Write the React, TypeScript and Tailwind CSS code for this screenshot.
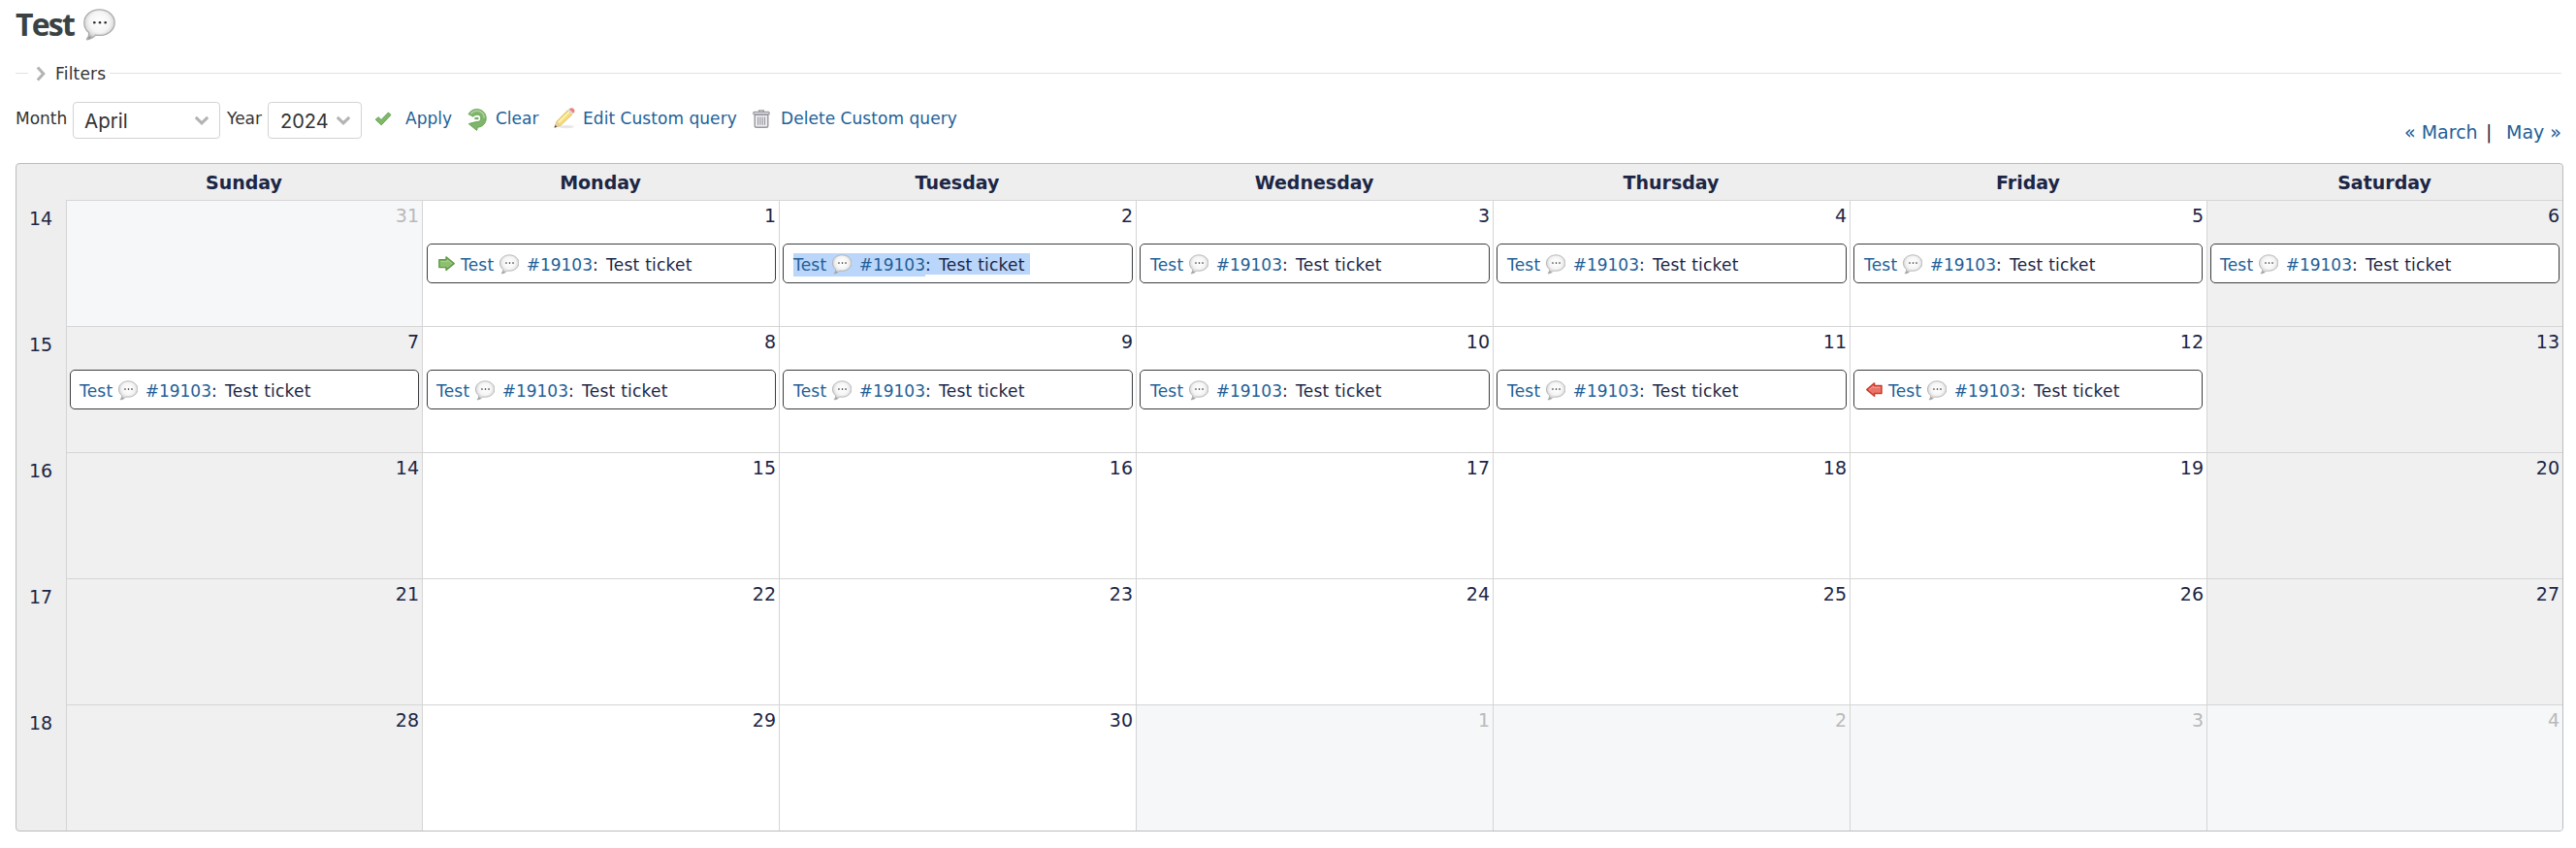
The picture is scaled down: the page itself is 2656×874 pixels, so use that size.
import React from "react";

const sans = "font-['DejaVu_Sans',Verdana,sans-serif]";

function Bubble({ className }: { className: string }) {
  return (
    <svg viewBox="0 0 33 33" className={className} aria-hidden="true">
      <defs>
        <radialGradient id="bubbleFill" cx="0.5" cy="0.42" r="0.6">
          <stop offset="0" stopColor="#ffffff" />
          <stop offset="0.55" stopColor="#f5f5f5" />
          <stop offset="0.82" stopColor="#d8d8d8" />
          <stop offset="1" stopColor="#989898" />
        </radialGradient>
      </defs>
      <path
        d="M16.5 0.8C25.3 0.8 32.2 6.6 32.2 14.2C32.2 21.8 25.3 27.4 16.5 27.4C15.2 27.4 13.6 27.4 12.4 27.2C10.4 29.6 7.6 31.4 4 31.8C3.2 31.8 3.3 31.2 3.8 30.8C5.4 29.2 6 27.2 5.6 24.6C2.5 22.2 0.8 18.6 0.8 14.2C0.8 6.6 7.7 0.8 16.5 0.8Z"
        fill="url(#bubbleFill)"
        stroke="#acacac"
        strokeWidth="1.3"
      />
      <g fill="#2f2f2f">
        <circle cx="11.3" cy="14.2" r="1.3" />
        <circle cx="17" cy="14.2" r="1.3" />
        <circle cx="22.7" cy="14.2" r="1.3" />
      </g>
    </svg>
  );
}

function Arrow({ dir }: { dir: "start" | "end" }) {
  return dir === "start" ? (
    <svg viewBox="0 0 17 16" className="mt-[12px] ml-[11px] h-4 w-[17px] shrink-0" aria-hidden="true">
      <path d="M0.8 3.8H8V0.9L16.2 7.6L8 14.4V11.6H0.8Z" fill="#8dbf6f" stroke="#619b48" strokeWidth="1.4" strokeLinejoin="round" />
      <path d="M2.2 5.6H9.2V3.8L13.8 7.6" fill="none" stroke="#abd191" strokeWidth="1" />
    </svg>
  ) : (
    <svg viewBox="0 0 17 16" className="mt-[12px] ml-[12px] h-4 w-[17px] shrink-0" aria-hidden="true">
      <path d="M16 3.4H8.6V0.9L0.8 7.6L8.6 14.2V11.6H16Z" fill="#e77668" stroke="#cf3a2e" strokeWidth="1.5" strokeLinejoin="round" />
      <path d="M14.6 5.4H7.4V4L3.2 7.6" fill="none" stroke="#ee9a8f" strokeWidth="1" />
    </svg>
  );
}

function Chevron({ className }: { className: string }) {
  return (
    <svg viewBox="0 0 16 10" className={className} aria-hidden="true">
      <path d="M1.8 1.8L8 7.8L14.2 1.8" fill="none" stroke="#b3b3b3" strokeWidth="3" />
    </svg>
  );
}

function Ticket({ marker, selected, className }: { marker?: "start" | "end"; selected?: boolean; className: string }) {
  const sel = selected ? "bg-[#bad6fb]" : "";
  return (
    <div className={`flex h-[41px] rounded-[5px] border border-[#3a3d40] bg-white text-[17px] leading-[24px] whitespace-pre ${className}`}>
      {marker && <Arrow dir={marker} />}
      <a className={`mt-[9px] flex h-6 w-[136px] shrink-0 text-[#235f97] ${marker ? "ml-[6px]" : ""} ${sel}`}>
        <span className="w-[41px] tracking-[0.2px]">Test</span>
        <Bubble className="mt-px h-[21px] w-[21px]" />
        <span className="ml-[7.5px]">#19103</span>
      </a>
      <span className={`mt-[9px] flex h-[22px] w-[108px] shrink-0 ${sel}`}>
        <span className="w-[14px]">: </span>
        <span className="tracking-[0.25px]">Test ticket</span>
      </span>
    </div>
  );
}

type Day = { n: number; other?: boolean; ticket?: boolean; marker?: "start" | "end"; selected?: boolean };

const weeks: { no: number; days: Day[] }[] = [
  {
    no: 14,
    days: [
      { n: 31, other: true },
      { n: 1, ticket: true, marker: "start" },
      { n: 2, ticket: true, selected: true },
      { n: 3, ticket: true },
      { n: 4, ticket: true },
      { n: 5, ticket: true },
      { n: 6, ticket: true },
    ],
  },
  {
    no: 15,
    days: [
      { n: 7, ticket: true },
      { n: 8, ticket: true },
      { n: 9, ticket: true },
      { n: 10, ticket: true },
      { n: 11, ticket: true },
      { n: 12, ticket: true, marker: "end" },
      { n: 13 },
    ],
  },
  { no: 16, days: [14, 15, 16, 17, 18, 19, 20].map((n) => ({ n })) },
  { no: 17, days: [21, 22, 23, 24, 25, 26, 27].map((n) => ({ n })) },
  {
    no: 18,
    days: [
      { n: 28 },
      { n: 29 },
      { n: 30 },
      { n: 1, other: true },
      { n: 2, other: true },
      { n: 3, other: true },
      { n: 4, other: true },
    ],
  },
];

const boxes = [
  "ml-[3px] w-[360px] pl-[9px]",
  "ml-[4px] w-[360px] pl-[9px]",
  "ml-[3px] w-[361px] pl-[10px]",
  "ml-[3px] w-[361px] pl-[10px]",
  "ml-[3px] w-[361px] pl-[10px]",
  "ml-[3px] w-[360px] pl-[10px]",
  "ml-[3px] w-[360px] pl-[9px]",
];
const markedBoxes = ["", "ml-[4px] w-[360px]", "", "", "", "ml-[3px] w-[360px]", ""];

const names = ["Sunday", "Monday", "Tuesday", "Wednesday", "Thursday", "Friday", "Saturday"];
const cols = "grid grid-cols-[51px_367px_368px_368px_368px_368px_368px_367px]";

export default function App() {
  return (
    <div className={`h-[874px] w-[2656px] overflow-hidden bg-white pl-4 text-[#1c2645] ${sans}`}>
      <header className="flex h-[56px] items-start">
        <h1 className="mt-[5px] w-[70px] font-['Open_Sans',sans-serif] text-[32px] leading-10 font-bold tracking-[-1.8px] text-[#3b4244]">Test</h1>
        <Bubble className="mt-[9px] h-[33px] w-[33px]" />
      </header>

      <div className="flex h-[39px] items-center pr-[15px] text-[17px] text-[#333]">
        <div className="h-px w-[13px] bg-[#e2e2e2]" />
        <svg viewBox="0 0 10 16" className="ml-[8px] h-4 w-[10px]" aria-hidden="true">
          <path d="M1.8 1.5L7.8 8L1.8 14.5" fill="none" stroke="#b3b3b3" strokeWidth="3" />
        </svg>
        <span className="mt-0.5 ml-[10px] w-[56px] tracking-[0.2px]">Filters</span>
        <div className="h-px flex-1 bg-[#e2e2e2]" />
      </div>

      <div className="flex h-[73px] pt-px text-[17px] leading-[24px] text-[#333]">
        <label className="mt-[14px] w-[59px]">Month</label>
        <div className="mt-[9px] flex h-[38px] w-[152px] items-center justify-between rounded-[4px] border border-[#d3d3d3] pr-[10px] pl-[11px] font-[Inter,sans-serif] text-[20.5px]">
          <span className="mt-px">April</span>
          <Chevron className="h-[10px] w-[16px]" />
        </div>
        <label className="mt-[14px] ml-[7px] w-[42px]">Year</label>
        <div className="mt-[9px] flex h-[38px] w-[97px] items-center justify-between rounded-[4px] border border-[#d3d3d3] pr-[10px] pl-[12px] font-[Inter,sans-serif] text-[20px]">
          <span className="mt-px">2024</span>
          <Chevron className="h-[10px] w-[16px]" />
        </div>
        <div className="ml-[13px] flex text-[#235f97]">
          <svg viewBox="0 0 18 15" className="mt-[19px] h-[15px] w-[18px]" aria-hidden="true">
            <path d="M1.2 8.2L4.2 5.8L7 8.6L14.4 1L17 3.4L7.2 13.8Z" fill="#7fba69" stroke="#5f9f4c" strokeWidth="1" strokeLinejoin="round" />
          </svg>
          <a className="mt-[14px] ml-[14px] w-[64px]">Apply</a>
          <svg viewBox="0 0 20 23" className="mt-[16px] h-[23px] w-5" aria-hidden="true">
            <path d="M1 5.6C3.2 2 6.2 0.6 9.8 0.6C15.2 0.6 19.2 4.6 19.2 10C19.2 15.2 15.6 18.8 10.4 19.2L9.6 22.4L1.2 15.6L8.6 13.6C11.8 13.8 13.8 12.4 13.8 10C13.8 7.6 12.2 6.2 10 6.2C8.4 6.2 7 6.8 6 8.2Z" fill="#7fb56a" stroke="#679f52" strokeWidth="0.9" strokeLinejoin="round" />
            <path d="M3.4 5.4C5 3.2 7.2 2.2 9.8 2.2C14.2 2.2 17.4 5.4 17.4 9.8" fill="none" stroke="#a8d098" strokeWidth="1.8" />
            <path d="M7.4 10H11.4" stroke="#78b05f" strokeWidth="2.4" />
          </svg>
          <a className="mt-[14px] ml-[9px] w-[60px]">Clear</a>
          <svg viewBox="0 0 22 22" className="mt-[15px] h-[22px] w-[22px]" aria-hidden="true">
            <ellipse cx="13" cy="19.6" rx="8" ry="1.6" fill="#e6e6e6" />
            <path d="M0.8 20.4L2.8 14.4L14.4 2.6L19 6.8L6.8 18.4Z" fill="#f6dc7c" stroke="#d9b75c" strokeWidth="0.9" />
            <path d="M4.6 15.6L16 4.2" stroke="#fdf3bd" strokeWidth="1.6" />
            <path d="M0.8 20.4L2.8 14.6C4.6 15 6.2 16.4 6.6 18.4Z" fill="#e8cfa4" />
            <path d="M0.6 20.6L1.5 17.9L3.4 19.6Z" fill="#444" />
            <path d="M14.2 2.8L15.6 1.4L20.2 5.6L18.8 7Z" fill="#dcdcdc" />
            <path d="M15.6 1.6C17.4 0 19 0 20.6 1.2C22 2.8 21.8 4.2 20.2 5.8Z" fill="#ee8080" />
          </svg>
          <a className="mt-[14px] ml-[8px] w-[175px] whitespace-nowrap tracking-[0.05px]">Edit Custom query</a>
          <svg viewBox="0 0 18 19" className="mt-[17px] h-[19px] w-[18px]" aria-hidden="true">
            <path d="M6.6 2.4V0.9H11.4V2.4" fill="none" stroke="#97979f" strokeWidth="1.3" />
            <rect x="0.8" y="2.4" width="16.4" height="2.6" rx="1" fill="#e2e2e6" stroke="#97979f" strokeWidth="1.2" />
            <path d="M2.2 5.2H15.8V16.4Q15.8 18.2 14 18.2H4Q2.2 18.2 2.2 16.4Z" fill="#ececef" stroke="#97979f" strokeWidth="1.4" />
            <path d="M5.6 7.4V15.8M7.9 7.4V15.8M10.2 7.4V15.8M12.5 7.4V15.8" stroke="#97979f" strokeWidth="1.1" />
          </svg>
          <a className="mt-[14px] ml-[11px] whitespace-nowrap tracking-[0.05px]">Delete Custom query</a>
        </div>
        <div className="mt-[28px] mr-[15px] ml-auto flex text-[19px] text-[#1c2645]">
          <a className="w-[84px] text-[#235f97]">« March</a>
          <span className="w-[21px]">|</span>
          <a className="text-[#235f97]">May »</a>
        </div>
      </div>

      <section className="h-[689px] w-[2627px] overflow-hidden rounded-[4px] border border-[#bbbcbd] bg-[#eeeeee] text-[19px]">
        <div className={`${cols} h-[37px]`}>
          <div />
          {names.map((n) => (
            <div key={n} className="pt-px text-center leading-[37px] font-bold">{n}</div>
          ))}
        </div>
        {weeks.map((w) => (
          <div key={w.no} className={`${cols} h-[130px]`}>
            <div className="pt-[7px] pl-[13px] leading-[24px]">{w.no}</div>
            {w.days.map((d, i) => {
              const bg = d.other ? "bg-[#f6f7f9] text-[#b9b9b9]" : i === 0 || i === 6 ? "bg-[#f0f0f0]" : "bg-white";
              return (
                <div key={i} className={`border-t border-l border-[#d5d5d5] ${bg}`}>
                  <div className="h-[44px] pt-[3px] pr-[3px] text-right leading-[24px]">{d.n}</div>
                  {d.ticket && (
                    <Ticket marker={d.marker} selected={d.selected} className={d.marker ? markedBoxes[i] : boxes[i]} />
                  )}
                </div>
              );
            })}
          </div>
        ))}
      </section>
    </div>
  );
}
